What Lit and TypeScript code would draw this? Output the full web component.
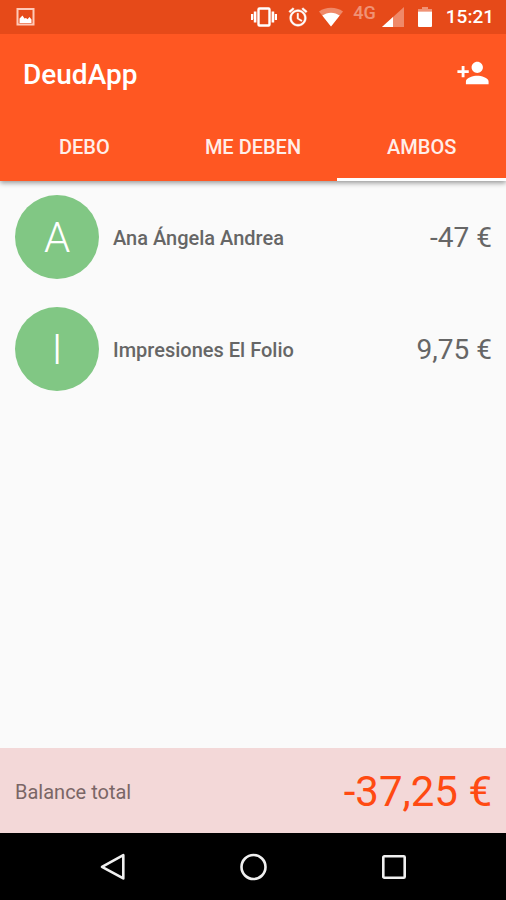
import { LitElement, html, css } from "lit";
import { customElement, state } from "lit/decorators.js";

interface Debt {
  name: string;
  amount: string;
  sign: number;
}

const DEBTS: Debt[] = [
  { name: "Ana Ángela Andrea", amount: "-47 €", sign: -1 },
  { name: "Impresiones El Folio", amount: "9,75 €", sign: 1 },
];

const TABS = ["DEBO", "ME DEBEN", "AMBOS"];

@customElement("status-bar")
export class StatusBar extends LitElement {
  static styles = css`
    :host {
      position: relative;
      z-index: 1;
      display: flex;
      align-items: center;
      height: 34px;
      padding: 0 12px 0 16px;
      background: #e64a19;
      color: #fff;
      box-sizing: border-box;
    }
    svg {
      display: block;
      flex: none;
    }
    .icons {
      display: flex;
      align-items: center;
      gap: 10px;
      margin-left: auto;
    }
    .network {
      display: flex;
      align-items: center;
      gap: 6px;
    }
    .type {
      align-self: flex-start;
      font-size: 18px;
      line-height: 12px;
      font-weight: 500;
      opacity: 0.4;
    }
    .battery {
      margin: 0 4px;
    }
    .clock {
      font-size: 19px;
      line-height: 24px;
      font-weight: 500;
    }
  `;

  render() {
    return html`
      <svg width="19" height="18" viewBox="0 0 19 18" fill="none">
        <rect x="1.5" y="1" width="16" height="15.5" stroke="#ffc9b8" stroke-width="2" />
        <path d="M3.5 15V10.5l3-3 2 3 1.5-.5 1.5 1.2 2-2.2 2 2.5V15z" fill="#fff" />
      </svg>
      <div class="icons">
        <svg width="26" height="20" viewBox="0 0 26 20">
          <rect x="7.5" y="1.5" width="11" height="17" rx="1" fill="none" stroke="#fff" stroke-width="2.4" />
          <path d="M0 7h2.200v6H0zM2.800 4.500h2.600v11H2.800zM23.800 7H26v6h-2.200zM20.600 4.500h2.600v11h-2.600z" fill="#fff" />
        </svg>
        <svg width="22" height="22" viewBox="0 0 24 24" fill="#fff">
          <path d="M22 5.720l-4.600-3.860-1.290 1.530 4.600 3.860L22 5.720zM7.880 3.390L6.600 1.860 2 5.710l1.290 1.530 4.590-3.850zM12.500 8H11v6l4.750 2.850.75-1.230-4-2.370V8zM12 4c-4.970 0-9 4.030-9 9s4.020 9 9 9c4.970 0 9-4.030 9-9s-4.030-9-9-9zm0 16c-3.870 0-7-3.130-7-7s3.130-7 7-7 7 3.130 7 7-3.130 7-7 7z" stroke="#fff" stroke-width="0.5" />
        </svg>
        <svg width="24" height="20" viewBox="0 0 24 20">
          <path d="M0 4.500C3.500 2 7.500.8 12 .8s8.500 1.200 12 3.700L12 19.500z" fill="#fff" opacity="0.35" />
          <path d="M3.300 8.600C5.800 6.700 8.800 5.700 12 5.700s6.200 1 8.700 2.900L12 19.500z" fill="#fff" />
        </svg>
        <div class="network">
          <span class="type">4G</span>
          <svg width="22" height="20" viewBox="0 0 22 20">
            <path d="M0 20L22 0V20z" fill="#fff" opacity="0.35" />
            <path d="M0 20L11 10V20z" fill="#fff" />
          </svg>
        </div>
        <svg class="battery" width="14" height="20" viewBox="0 0 14 20" fill="#fff">
          <path d="M4 0h6v2h4v2.500H0V2h4z" opacity="0.4" />
          <path d="M0 4.500h14V19a1 1 0 0 1-1 1H1a1 1 0 0 1-1-1z" />
        </svg>
        <span class="clock">15:21</span>
      </div>
    `;
  }
}

@customElement("nav-bar")
export class NavBar extends LitElement {
  static styles = css`
    :host {
      display: grid;
      grid-template-columns: repeat(3, 1fr);
      height: 67px;
      padding: 0 42px;
      background: #000;
      box-sizing: border-box;
    }
    button {
      display: flex;
      align-items: center;
      justify-content: center;
      padding: 0;
      border: 0;
      background: none;
    }
  `;

  render() {
    return html`
      <button aria-label="Atrás">
        <svg width="28" height="28" viewBox="0 0 28 28" fill="none" stroke="#f0f0f0" stroke-width="2.600" stroke-linejoin="round">
          <path d="M25.300 2.200V25.400L4 13.800z" />
        </svg>
      </button>
      <button aria-label="Inicio">
        <svg width="28" height="28" viewBox="0 0 28 28" fill="none" stroke="#f0f0f0" stroke-width="2.600">
          <circle cx="14.500" cy="14" r="12" />
        </svg>
      </button>
      <button aria-label="Recientes">
        <svg width="28" height="28" viewBox="0 0 28 28" fill="none" stroke="#f0f0f0" stroke-width="2.600">
          <rect x="3.300" y="3.300" width="21.400" height="21.400" rx="1" />
        </svg>
      </button>
    `;
  }
}

@customElement("app-root")
export class AppRoot extends LitElement {
  @state() private active = 2;

  static styles = css`
    :host {
      display: flex;
      flex-direction: column;
      min-height: 100vh;
      background: #fafafa;
      color: #666;
      font-family: Roboto, sans-serif;
    }
    header {
      background: #ff5722;
      color: #fff;
      box-shadow: 0 2px 5px rgba(0, 0, 0, 0.4);
    }
    .toolbar {
      display: flex;
      align-items: center;
      justify-content: space-between;
      height: 82px;
      padding: 0 16px 0 23px;
    }
    h1 {
      margin: 0;
      font-size: 28px;
      line-height: 36px;
      font-weight: 500;
    }
    .add {
      display: flex;
      padding: 0 0 4px;
      border: 0;
      background: none;
      color: inherit;
    }
    .tabs {
      display: grid;
      grid-template-columns: repeat(3, 1fr);
    }
    .tab {
      height: 65px;
      padding: 0;
      border: 0;
      border-bottom: 3px solid transparent;
      background: none;
      color: #ffeee9;
      font: 500 20px/24px Roboto, sans-serif;
    }
    .tab.active {
      border-bottom-color: #fff;
    }
    main {
      flex: 1;
    }
    ul {
      margin: 0;
      padding: 0;
      list-style: none;
    }
    li {
      display: flex;
      align-items: center;
      gap: 14px;
      padding: 14px 14px 14px 15px;
    }
    .avatar {
      display: flex;
      align-items: center;
      justify-content: center;
      flex: none;
      width: 84px;
      height: 84px;
      border-radius: 50%;
      background: #81c784;
      color: #fff;
      font-size: 42px;
      font-weight: 300;
    }
    .name,
    .amount {
      padding-top: 2px;
    }
    .name {
      flex: 1;
      font-size: 20px;
      line-height: 24px;
      font-weight: 500;
    }
    .amount {
      font-size: 28px;
      line-height: 36px;
    }
    footer {
      display: flex;
      align-items: center;
      justify-content: space-between;
      height: 85px;
      padding: 2px 14px 0 15px;
      box-sizing: border-box;
      background: #f3d8d8;
      font-size: 20px;
      color: #7a6666;
    }
    .total {
      font-size: 42px;
      line-height: 48px;
      color: #ff4a12;
    }
  `;

  render() {
    const shown = DEBTS.filter(
      (d) => this.active === 2 || (this.active === 0 ? d.sign < 0 : d.sign > 0)
    );
    return html`
      <status-bar></status-bar>
      <header>
        <div class="toolbar">
          <h1>DeudApp</h1>
          <button class="add" aria-label="Añadir persona">
            <svg width="34" height="34" viewBox="0 0 24 24" fill="currentColor">
              <path d="M15 12c2.210 0 4-1.790 4-4s-1.790-4-4-4-4 1.790-4 4 1.790 4 4 4zm-9-2V7H4v3H1v2h3v3h2v-3h3v-2H6zm9 4c-2.670 0-8 1.340-8 4v2h16v-2c0-2.660-5.330-4-8-4z" />
            </svg>
          </button>
        </div>
        <div class="tabs" role="tablist">
          ${TABS.map(
            (label, i) => html`<button
              class="tab ${i === this.active ? "active" : ""}"
              role="tab"
              aria-selected=${i === this.active}
              @click=${() => (this.active = i)}
            >${label}</button>`
          )}
        </div>
      </header>
      <main>
        <ul>
          ${shown.map(
            (d) => html`<li>
              <span class="avatar" aria-hidden="true">${d.name[0]}</span>
              <span class="name">${d.name}</span>
              <span class="amount">${d.amount}</span>
            </li>`
          )}
        </ul>
      </main>
      <footer>
        <span>Balance total</span>
        <span class="total">-37,25 €</span>
      </footer>
      <nav-bar></nav-bar>
    `;
  }
}
